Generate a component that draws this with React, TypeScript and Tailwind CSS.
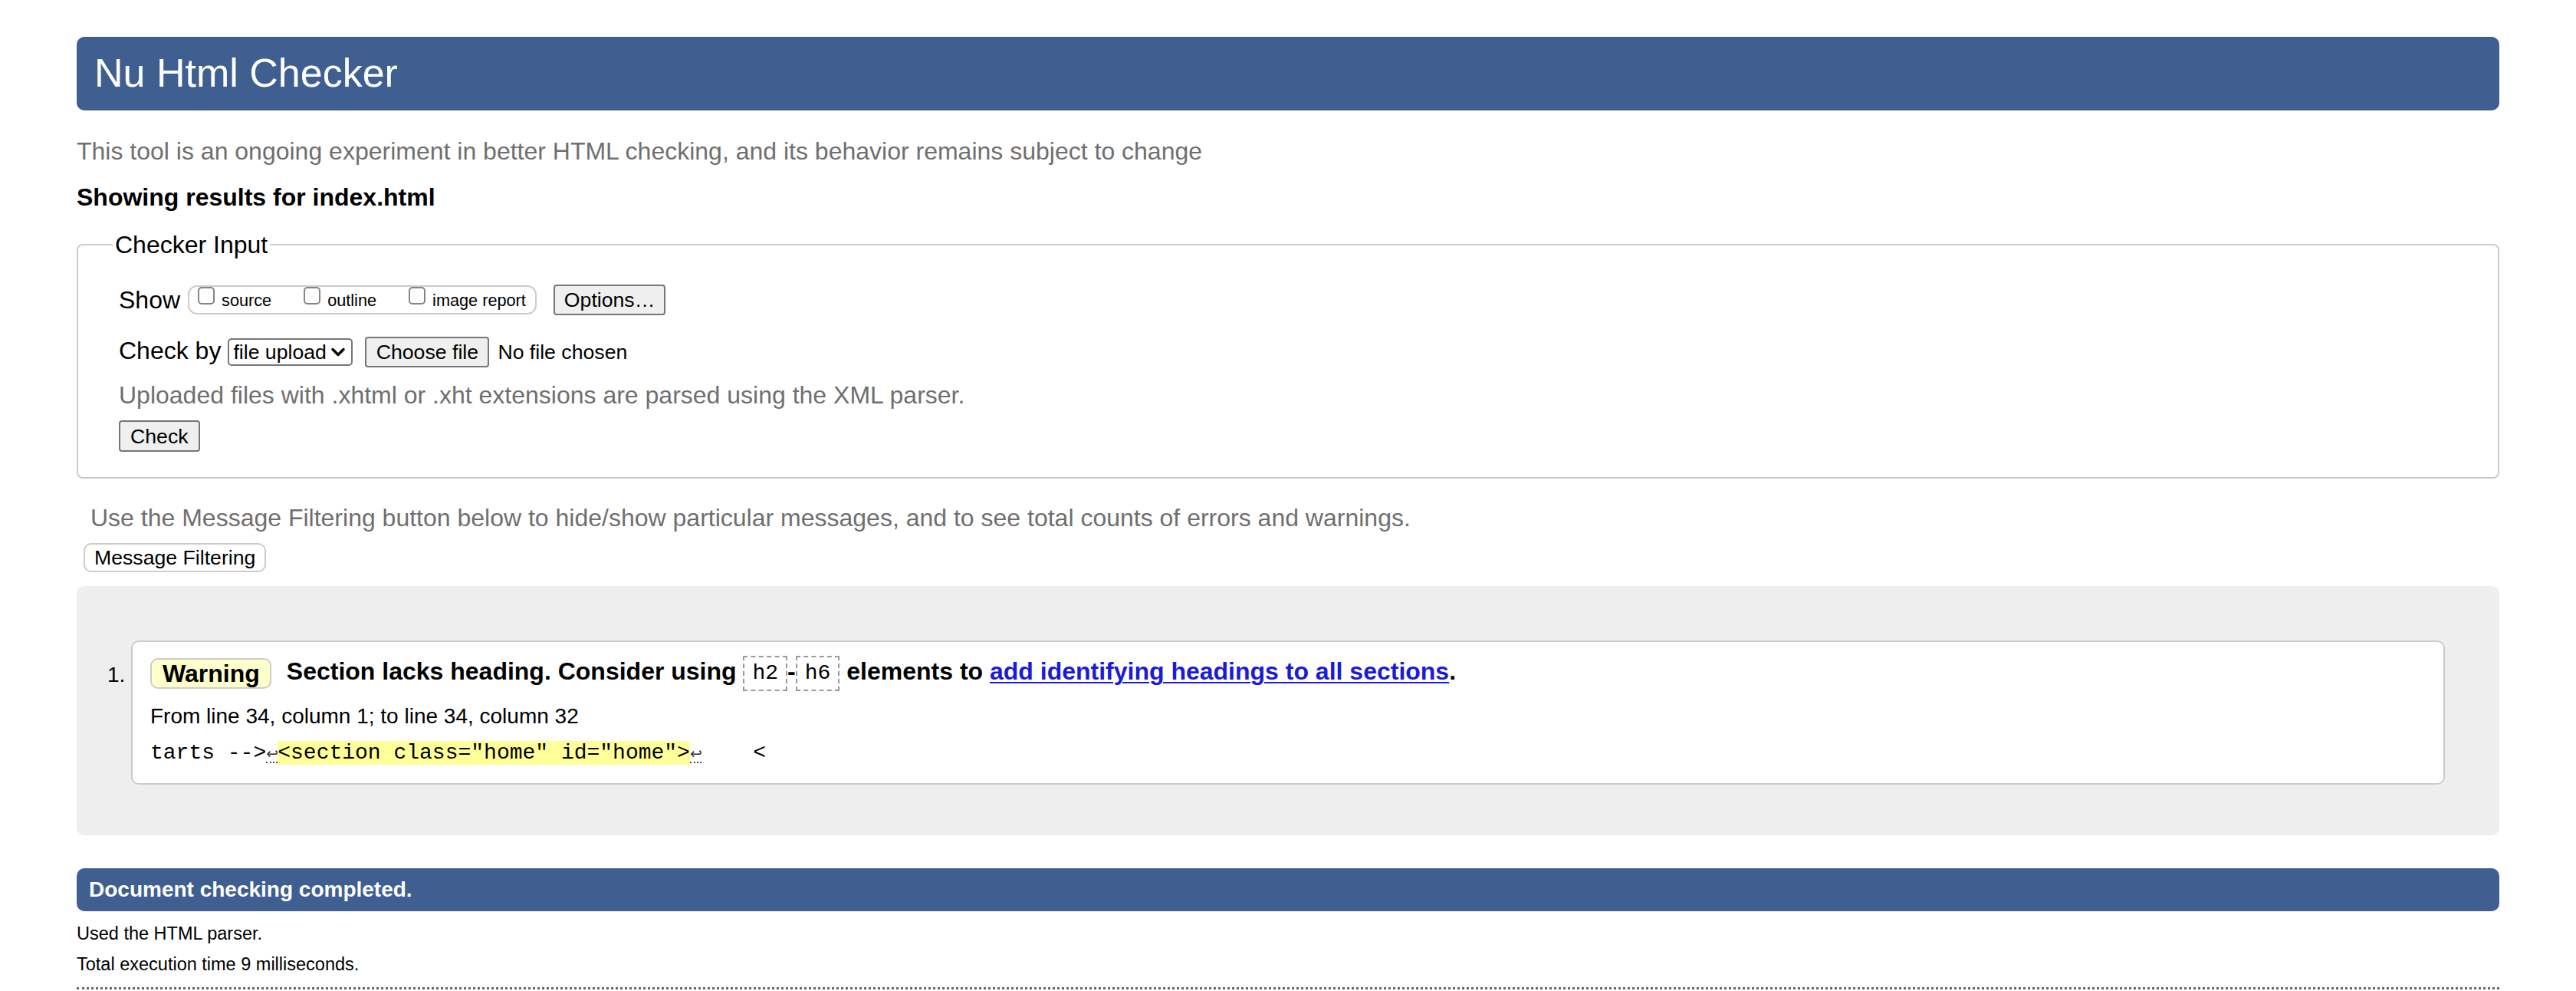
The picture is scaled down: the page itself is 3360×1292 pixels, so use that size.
import React from 'react';

const options = ['source', 'outline', 'image report'];

function Return() {
  // the little return arrow that marks a line break in the extract
  return (
    <span className="inline-block w-[15px] overflow-visible border-b-2 border-dotted border-[#444444] text-center font-['DejaVu_Sans',sans-serif] text-[19px] leading-[22px] tracking-[-1px] text-[#333333]">
      ↩
    </span>
  );
}

export default function App() {
  return (
    <div className="min-h-screen bg-white px-[100px] pt-[48px] font-['Liberation_Sans',Arial,sans-serif] text-black">
      <header className="h-[96px] rounded-[10px] bg-[#3e5f90] pl-[23px] pt-[17px]">
        <h1 className="text-[52px] leading-[60px] text-white">Nu Html Checker</h1>
      </header>

      <p className="mt-[35px] text-[32px] leading-[36px] text-[#6f6f6f]">
        This tool is an ongoing experiment in better HTML checking, and its behavior remains subject to change
      </p>
      <p className="mt-[24px] text-[32px] font-bold leading-[36px]">Showing results for index.html</p>

      <fieldset className="mt-[26px] rounded-[8px] border-2 border-[#cccccc] pb-[33px] pl-[53px] pt-[34px]">
        <legend className="-ml-[8px] px-[3px] text-[32px] leading-[36px]">Checker Input</legend>

        <div className="flex h-[40px] items-center">
          <span className="text-[32px] leading-[36px]">Show</span>
          <div className="ml-[10px] flex h-[38px] items-start rounded-[12px] border-2 border-[#cccccc] pl-[11px] pr-[12px]">
            {options.map((label, i) => (
              <label key={label} className={i > 0 ? 'ml-[42px] flex items-start' : 'flex items-start'}>
                <span className="h-[23px] w-[22px] rounded-[5px] border-2 border-[#858585] bg-white" />
                <span className="ml-[9px] mt-[5px] text-[21.7px] leading-[26px]">{label}</span>
              </label>
            ))}
          </div>
          <button className="ml-[22px] h-[40px] rounded-[4px] border-2 border-[#767676] bg-[#efefef] px-[12px] text-[26.67px] leading-[32px]">
            Options…
          </button>
        </div>

        <div className="mt-[28px] flex h-[40px] items-center">
          <span className="mb-[5px] text-[32px] leading-[36px]">Check by</span>
          <div className="ml-[9px] flex h-[36px] w-[163px] items-center justify-between rounded-[5px] border-2 border-[#767676] bg-white pl-[5px] pr-[7px] text-[26.67px] leading-[32px]">
            <span>file upload</span>
            <svg width="20" height="12" viewBox="0 0 20 12">
              <path d="M3 2.5 L10 9.5 L17 2.5" fill="none" stroke="#000" strokeWidth="3.5" strokeLinecap="round" strokeLinejoin="round" />
            </svg>
          </div>
          <button className="ml-[16px] h-[40px] w-[162px] rounded-[4px] border-2 border-[#767676] bg-[#efefef] text-[26.67px] leading-[32px]">
            Choose file
          </button>
          <span className="ml-[11px] text-[26.67px] leading-[32px]">No file chosen</span>
        </div>

        <p className="mt-[18px] text-[32px] leading-[36px] text-[#6f6f6f]">
          Uploaded files with .xhtml or .xht extensions are parsed using the XML parser.
        </p>

        <button className="mt-[15px] block h-[41px] rounded-[4px] border-2 border-[#767676] bg-[#efefef] px-[13px] text-[26.67px] leading-[32px]">
          Check
        </button>
      </fieldset>

      <p className="mt-[33px] pl-[18px] text-[32px] leading-[36px] text-[#6f6f6f]">
        Use the Message Filtering button below to hide/show particular messages, and to see total counts of errors and warnings.
      </p>
      <button className="ml-[9px] mt-[15px] block h-[38px] rounded-[10px] border-2 border-[#cccccc] bg-white px-[12px] text-[26.67px] leading-[32px]">
        Message Filtering
      </button>

      <div className="mt-[18px] flex items-start rounded-[10px] bg-[#eeeeee] pb-[66px] pl-[40px] pr-[71px] pt-[71px]">
        <span className="w-[31px] shrink-0 pt-[29px] text-[28px] leading-[32px]">1.</span>
        <div className="flex-1 rounded-[10px] border-2 border-[#cccccc] bg-white pb-[23px] pl-[23px] pt-[18px]">
          <div className="flex h-[46px] items-center text-[32px] font-bold leading-[36px]">
            <span className="h-[40px] rounded-[10px] border-2 border-[#cccccc] bg-[#ffffcc] pl-[14px] pr-[13px]">Warning</span>
            <span className="ml-[20px]">
              Section lacks heading. Consider using{' '}
              <code className="inline-block border-2 border-dashed border-[#999999] px-[10px] py-[5px] align-middle font-['Liberation_Mono',monospace] text-[28px] font-normal leading-[32px]">
                h2
              </code>
              -
              <code className="inline-block border-2 border-dashed border-[#999999] px-[10px] py-[5px] align-middle font-['Liberation_Mono',monospace] text-[28px] font-normal leading-[32px]">
                h6
              </code>{' '}
              elements to{' '}
              <a href="#" className="text-[#1a1ad9] underline decoration-2 underline-offset-[3px]">
                add identifying headings to all sections
              </a>
              .
            </span>
          </div>

          <p className="mt-[17px] text-[28px] leading-[32px]">From line 34, column 1; to line 34, column 32</p>

          <p className="mt-[16px] whitespace-pre font-['Liberation_Mono',monospace] text-[28px] leading-[32px]">
            {'tarts -->'}
            <Return />
            <mark className="bg-[#ffff99] text-black">{'<section class="home" id="home">'}</mark>
            <Return />
            {'    <'}
          </p>
        </div>
      </div>

      <div className="mt-[43px] flex h-[56px] items-center rounded-[10px] bg-[#3e5f90] pl-[16px] text-[28px] font-bold leading-[32px] text-white">
        Document checking completed.
      </div>
      <p className="mt-[15px] text-[23.5px] leading-[28px]">Used the HTML parser.</p>
      <p className="mt-[12px] text-[23.5px] leading-[28px]">Total execution time 9 milliseconds.</p>
      <div className="mt-[16px] border-t-[3px] border-dotted border-[#666666]" />
    </div>
  );
}
